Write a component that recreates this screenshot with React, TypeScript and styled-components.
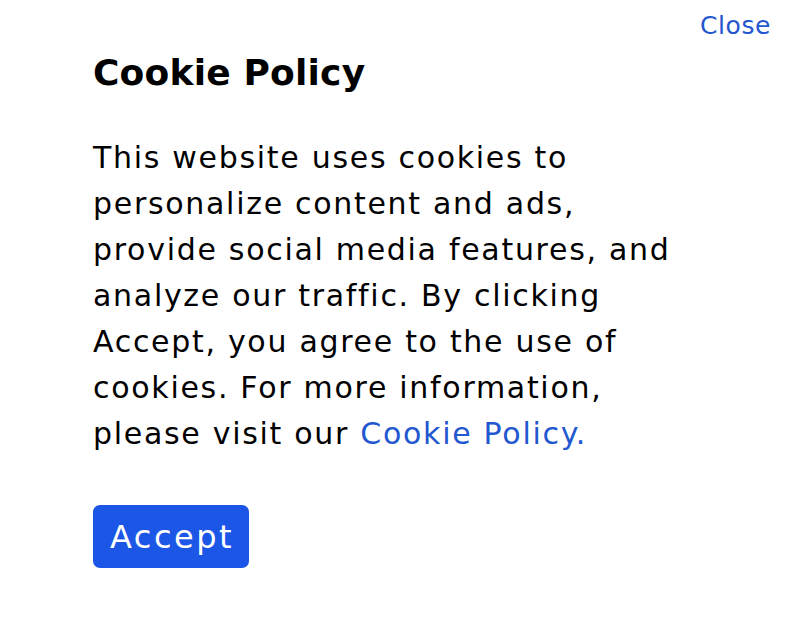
import React from 'react'
import styled, { createGlobalStyle } from 'styled-components'

const GlobalStyle = createGlobalStyle`
  html, body {
    margin: 0;
    padding: 0;
    background: #ffffff;
  }
  body {
    font-family: "DejaVu Sans", "Noto Sans", sans-serif;
    color: #000000;
  }
`

const Page = styled.div`
  width: 787px;
  height: 630px;
  box-sizing: border-box;
  padding: 12px 16px 0 93px;
  display: flex;
  flex-direction: column;
`

const TopBar = styled.div`
  display: flex;
  justify-content: flex-end;
  height: 28px;
`

const CloseLink = styled.a`
  font-size: 25px;
  line-height: 28px;
  letter-spacing: 0.6px;
  color: #2357cf;
  text-decoration: none;
  cursor: pointer;
`

const Title = styled.h1`
  margin: 11px 0 0;
  font-size: 36px;
  font-weight: 700;
  line-height: 44px;
  letter-spacing: 0.2px;
`

const Body = styled.p`
  margin: 40px 0 0;
  font-size: 30px;
  line-height: 46px;
  letter-spacing: 1.7px;
  white-space: nowrap;
`

const Link = styled.a`
  color: #2357cf;
  text-decoration: none;
`

const AcceptButton = styled.button`
  margin-top: 48px;
  align-self: flex-start;
  height: 63px;
  padding: 0 15px 0 17px;
  border: none;
  border-radius: 7px;
  background: #1b56e6;
  color: #ffffff;
  font-family: inherit;
  font-size: 32px;
  letter-spacing: 2.5px;
  cursor: pointer;
`

export default function App() {
  return (
    <>
      <GlobalStyle />
      <Page>
        <TopBar>
          <CloseLink>Close</CloseLink>
        </TopBar>
        <Title>Cookie Policy</Title>
        <Body>
          This website uses cookies to
          <br />
          personalize content and ads,
          <br />
          provide social media features, and
          <br />
          analyze our traffic. By clicking
          <br />
          Accept, you agree to the use of
          <br />
          cookies. For more information,
          <br />
          please visit our <Link>Cookie Policy.</Link>
        </Body>
        <AcceptButton>Accept</AcceptButton>
      </Page>
    </>
  )
}
